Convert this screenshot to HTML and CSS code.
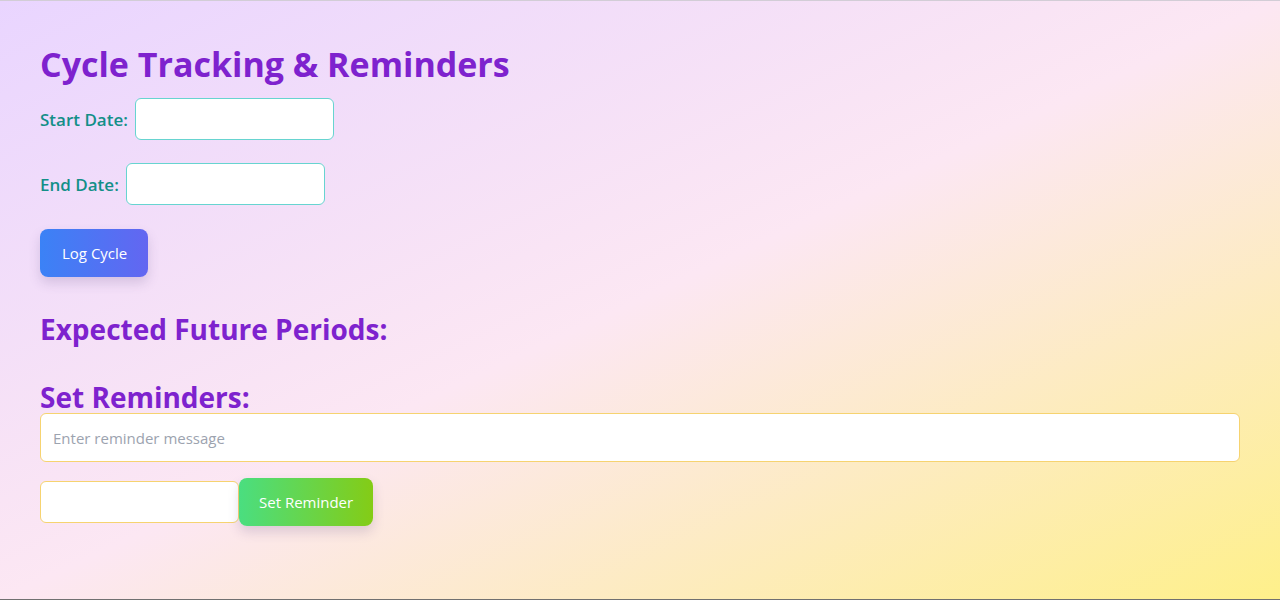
FILE: index.html
```html
<!DOCTYPE html>
<html lang="en">
<head>
<meta charset="utf-8">
<title>Cycle Tracking & Reminders</title>
<link rel="stylesheet" href="styles.css">
</head>
<body>
<main class="page">
  <h1 class="title">Cycle Tracking &amp; Reminders</h1>
  <div class="field">
    <label class="label" for="start">Start Date:</label>
    <input class="date-input" id="start" type="text">
  </div>
  <div class="field">
    <label class="label" for="end">End Date:</label>
    <input class="date-input" id="end" type="text">
  </div>
  <button class="btn btn-blue">Log Cycle</button>
  <h2 class="section-title section-expected">Expected Future Periods:</h2>
  <h2 class="section-title section-reminders">Set Reminders:</h2>
  <input class="reminder-input" type="text" placeholder="Enter reminder message">
  <div class="reminder-row">
    <input class="date-input date-yellow" type="text">
    <button class="btn btn-green">Set Reminder</button>
  </div>
</main>
</body>
</html>
```
FILE: styles.css
```css
* { box-sizing: border-box; }
html, body { height: 100%; }
body {
  margin: 0;
  font-family: "Open Sans", "Noto Sans", sans-serif;
  background: linear-gradient(to bottom right, #e9d5ff 0%, #fce7f3 50%, #fef08a 100%);
  border-top: 1px solid #d2cdd6;
  border-bottom: 1px solid #707070;
}
.page {
  padding: 39px 40px 0 40px;
  display: flex;
  flex-direction: column;
  align-items: flex-start;
}
.title {
  margin: 0 0 10px 0;
  font-size: 34px;
  line-height: 48px;
  font-weight: 700;
  color: #7e22ce;
}
.field {
  display: flex;
  align-items: center;
  gap: 7px;
  margin-bottom: 23px;
}
.label {
  font-size: 17px;
  font-weight: 600;
  color: #138f88;
}
.date-input {
  width: 199px;
  height: 42px;
  border: 1px solid #67d4d0;
  border-radius: 6px;
  background: #fff;
  font: inherit;
  padding: 0 10px;
}
.btn {
  height: 48px;
  border: none;
  border-radius: 8px;
  color: #fff;
  font-family: inherit;
  font-size: 15px;
  padding: 0 20px;
  box-shadow: 0 6px 12px rgba(80, 60, 120, 0.18);
  cursor: pointer;
}
.btn-blue {
  margin-top: 1px;
  padding: 0 21px 0 22px;
  background: linear-gradient(to right, #3b82f6, #6366f1);
}
.btn-green {
  background: linear-gradient(to right, #4ade80, #84cc16);
}
.section-title {
  margin: 0;
  font-size: 28px;
  line-height: 32px;
  font-weight: 700;
  color: #7e22ce;
}
.section-expected { margin-top: 36px; }
.section-reminders { margin-top: 36px; }
.reminder-input {
  align-self: stretch;
  height: 49px;
  border: 1px solid #f6d370;
  border-radius: 6px;
  background: #fff;
  font-family: inherit;
  font-size: 15px;
  padding: 0 12px;
  margin-bottom: 16px;
}
.reminder-input::placeholder { color: #9ca3af; }
.reminder-row {
  display: flex;
  align-items: center;
}
.date-yellow { border-color: #f6d370; }
```
